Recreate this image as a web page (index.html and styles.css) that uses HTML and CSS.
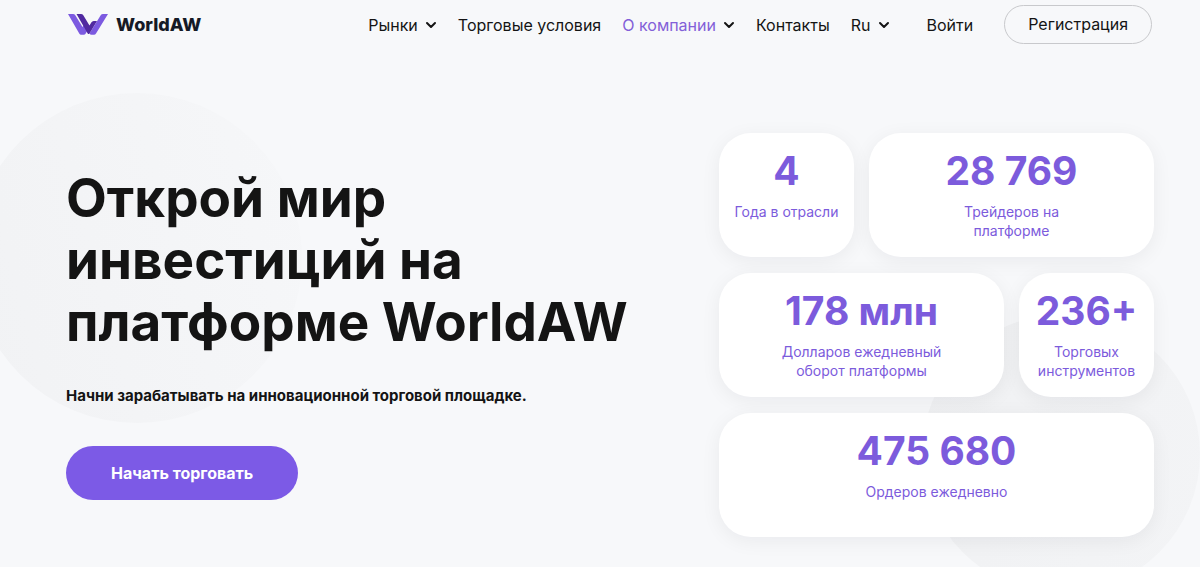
FILE: index.html
```html
<!DOCTYPE html>
<html lang="ru">
<head>
<meta charset="utf-8">
<meta name="viewport" content="width=device-width, initial-scale=1">
<title>WorldAW</title>
<link rel="stylesheet" href="styles.css">
</head>
<body>
<div class="page">
  <div class="circle circle-left"></div>
  <div class="circle circle-right"></div>

  <header class="header">
    <a class="logo" href="#">
      <svg class="logo-mark" viewBox="0 0 40 21" aria-hidden="true">
        <path fill="#7c5ae0" d="M0 0h5q1.500 0 2.300 1.300L14.500 13l2.500-4 4 5-3.600 6q-.6.800-1.400.800h-3q-1 0-1.600-1z"/>
        <path fill="#7c5ae0" d="M40 0h-5q-1.500 0-2.300 1.300L21.500 19.500q.6 1.300 2 1.300h2.500q1.300 0 2-1.200z"/>
        <path fill="#5029a0" d="M8.500 0h4.500q1.500 0 2.300 1.300L21.500 11.500l1.800-3q.9-1.500 2.400-1.500h3.300l-7.500 12.400q-.9 1.300-1.800 0z"/>
      </svg>
      <span class="logo-name">WorldAW</span>
    </a>
    <nav class="nav">
      <button class="nav-item" type="button">Рынки
        <svg class="chevron" viewBox="0 0 12 8" aria-hidden="true"><path d="M2 2l4 4 4-4"/></svg>
      </button>
      <a class="nav-item" href="#">Торговые условия</a>
      <button class="nav-item" type="button"><span class="current">О компании</span>
        <svg class="chevron" viewBox="0 0 12 8" aria-hidden="true"><path d="M2 2l4 4 4-4"/></svg>
      </button>
      <a class="nav-item" href="#">Контакты</a>
      <button class="nav-item" type="button">Ru
        <svg class="chevron" viewBox="0 0 12 8" aria-hidden="true"><path d="M2 2l4 4 4-4"/></svg>
      </button>
    </nav>
    <div class="account">
      <a class="nav-item" href="#">Войти</a>
      <a class="register" href="#">Регистрация</a>
    </div>
  </header>

  <main class="hero">
    <section class="intro">
      <h1 class="title">Открой мир инвестиций на платформе WorldAW</h1>
      <p class="lead">Начни зарабатывать на инновационной торговой площадке.</p>
      <button class="start" type="button">Начать торговать</button>
    </section>
    <section class="stats">
      <article class="card">
        <strong class="value">4</strong>
        <p class="label">Года в отрасли</p>
      </article>
      <article class="card card-wide">
        <strong class="value">28 769</strong>
        <p class="label">Трейдеров на<br>платформе</p>
      </article>
      <article class="card card-wide">
        <strong class="value">178 млн</strong>
        <p class="label">Долларов ежедневный<br>оборот платформы</p>
      </article>
      <article class="card">
        <strong class="value">236+</strong>
        <p class="label">Торговых инструментов</p>
      </article>
      <article class="card card-full">
        <strong class="value">475 680</strong>
        <p class="label">Ордеров ежедневно</p>
      </article>
    </section>
  </main>
</div>
</body>
</html>
```

FILE: styles.css
```css
* {
  box-sizing: border-box;
}

body {
  margin: 0;
  background: #f7f8fa;
  color: #141414;
  font-family: Inter, "Liberation Sans", sans-serif;
  font-size: 16px;
}

h1,
p {
  margin: 0;
}

a {
  color: inherit;
  text-decoration: none;
}

button {
  padding: 0;
  border: 0;
  background: none;
  color: inherit;
  font: inherit;
  cursor: pointer;
}

.page {
  position: relative;
  min-height: 100vh;
  overflow: hidden;
}

/* Decorative background discs */
.circle {
  position: absolute;
  border-radius: 50%;
}

.circle-left {
  top: 93px;
  left: -28px;
  width: 330px;
  height: 330px;
  background: linear-gradient(75deg, #f1f2f4, #f6f7f9);
}

.circle-right {
  top: 315px;
  right: 0;
  width: 278px;
  height: 278px;
  background: linear-gradient(285deg, #f3f4f6, #f0f1f3);
}

.header {
  position: relative;
  display: flex;
  align-items: center;
  padding: 5px 48px 0 68px;
}

.logo {
  display: flex;
  align-items: center;
  gap: 8px;
  margin-right: auto;
}

.logo-mark {
  width: 40px;
  height: 21px;
}

.logo-name {
  color: #151a26;
  font-size: 18px;
  font-weight: 800;
  line-height: 20px;
}

.nav {
  display: flex;
  align-items: center;
  gap: 21px;
}

.nav-item {
  display: flex;
  align-items: center;
  gap: 7px;
  font-weight: 400;
  line-height: 20px;
}

.current {
  color: #8360d8;
}

.chevron {
  width: 12px;
  height: 8px;
  fill: none;
  stroke: #141414;
  stroke-width: 2;
  stroke-linecap: round;
  stroke-linejoin: round;
}

.account {
  display: flex;
  align-items: center;
  gap: 31px;
  margin-left: 37px;
}

.register {
  padding: 8px 23px;
  border: 1px solid #c8c9cc;
  border-radius: 20px;
  font-weight: 400;
  line-height: 21px;
}

.hero {
  position: relative;
  display: grid;
  grid-template-columns: minmax(0, 1fr) 435px;
  gap: 64px;
  padding: 89px 46px 30px 66px;
}

.intro {
  padding-top: 34px;
}

.title {
  max-width: 580px;
  font-size: 53px;
  font-weight: 700;
  line-height: 62px;
}

.lead {
  margin-top: 33px;
  font-size: 15px;
  font-weight: 700;
  line-height: 20px;
}

.start {
  margin-top: 40px;
  padding: 17px 45px;
  border-radius: 27px;
  background: #7c5ae6;
  color: #fff;
  font-weight: 700;
  line-height: 20px;
}

.stats {
  display: grid;
  grid-template-columns: 135px minmax(0, 1fr) 135px;
  gap: 16px 15px;
}

.card {
  min-height: 124px;
  padding: 15px 12px;
  border-radius: 32px;
  background: #fff;
  box-shadow: 0 4px 20px rgba(20, 20, 30, 0.06);
  color: #7c5bdc;
  text-align: center;
}

.card-wide {
  grid-column: span 2;
}

.card-full {
  grid-column: 1 / -1;
}

.value {
  display: block;
  font-size: 39px;
  font-weight: 700;
  line-height: 46px;
}

.label {
  margin-top: 8px;
  font-size: 14px;
  font-weight: 400;
  line-height: 19px;
}
```
